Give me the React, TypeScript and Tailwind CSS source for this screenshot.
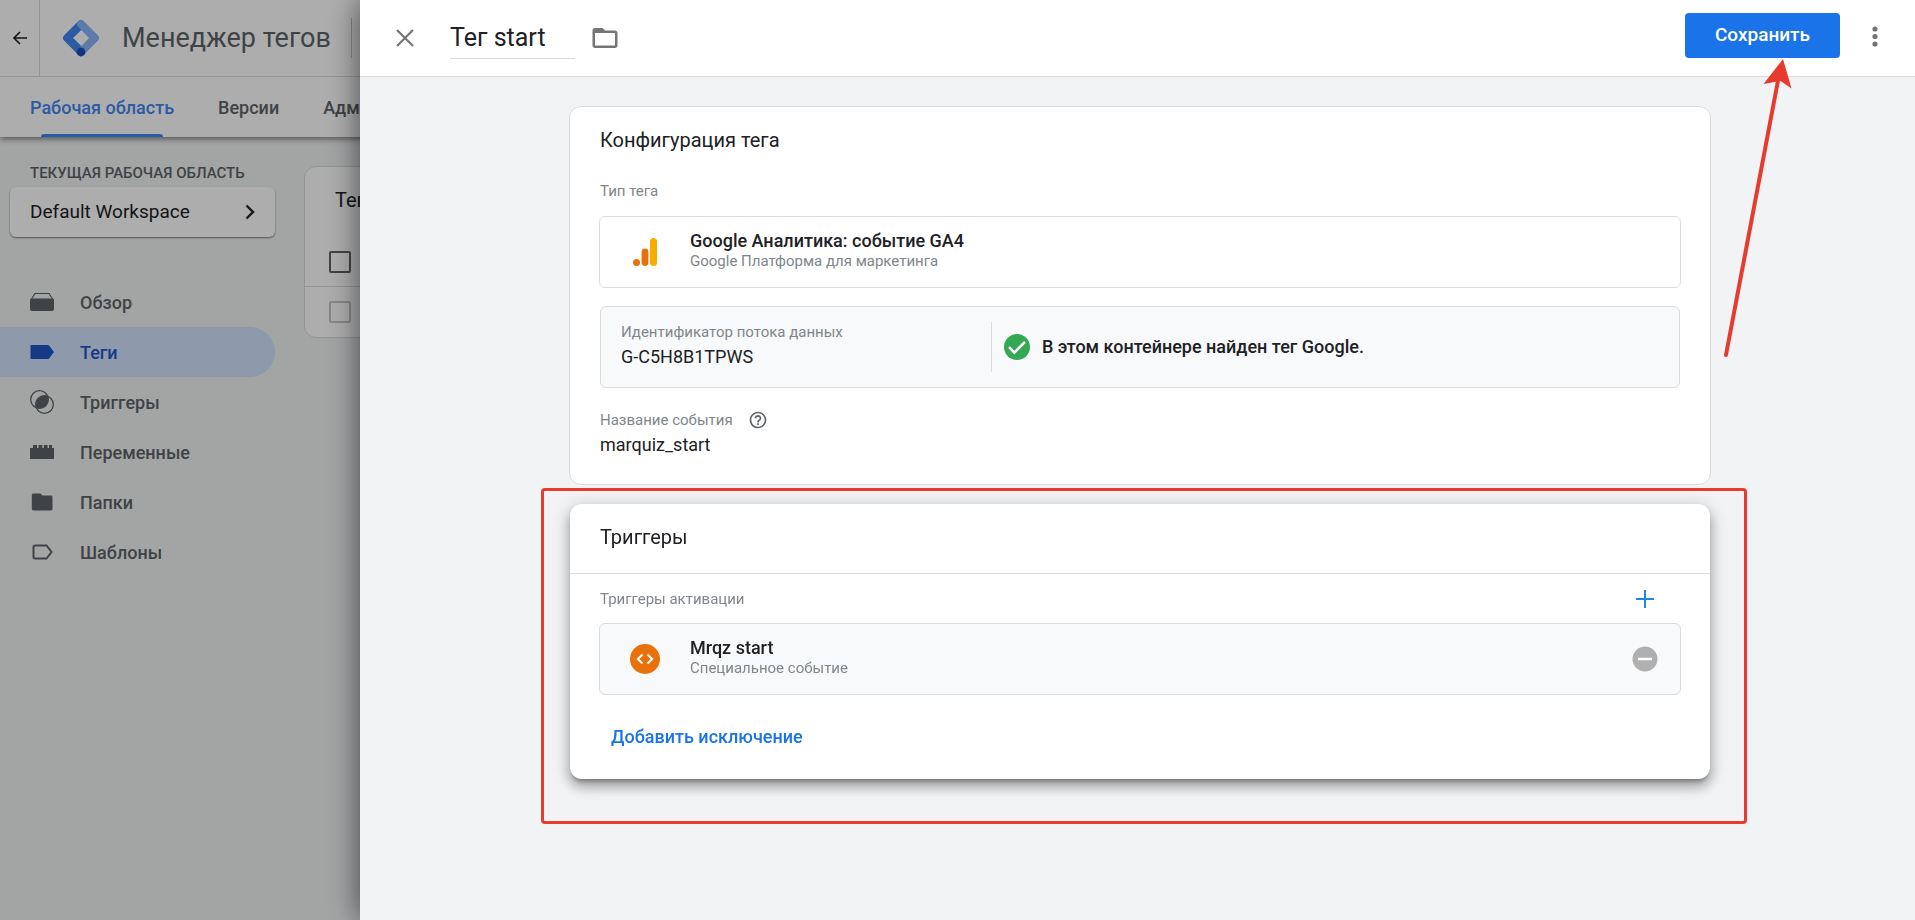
// Utils
import clsx from 'clsx';

// Types
import type { FC, ReactNode } from 'react';

interface IconProps {
    className?: string;
}

const BackIcon: FC<IconProps> = ({ className }) => (
    <svg viewBox="0 0 16 16" fill="none" stroke="currentColor" strokeWidth="1.6" className={className}>
        <path d="M15 8H2M8 2L2 8l6 6" />
    </svg>
);

const LogoIcon: FC<IconProps> = ({ className }) => (
    <svg viewBox="0 0 38 38" className={className}>
        <path
            d="M16.2 2.2 2.2 16.2a4 4 0 0 0 0 5.6l14 14a4 4 0 0 0 5.6 0l3-3.2L11.4 19 23 7.4 21.8 2.2z"
            fill="#4285f4"
        />
        <path
            d="M16.2 2.2a4 4 0 0 1 5.6 0l14 14a4 4 0 0 1 0 5.6L22.4 35.2l-5.6-5.6L27 19 16.2 8a4 4 0 0 1 0-5.8z"
            fill="#8ab4f8"
        />
        <path d="M11.4 19 19 11.4 26.6 19 19 26.6z" fill="#fff" />
        <circle cx="19" cy="33" r="4.4" fill="#1a4fc0" />
    </svg>
);

const OverviewIcon: FC<IconProps> = ({ className }) => (
    <svg viewBox="0 0 24 24" fill="currentColor" className={className}>
        <path d="M2 8.5h20a1.5 1.5 0 0 1 2 1.5v9a2 2 0 0 1-2 2H2a2 2 0 0 1-2-2v-9a1.5 1.5 0 0 1 2-1.5z" />
        <path d="M1.5 9 5 3.5h14L22.5 9" fill="none" stroke="currentColor" strokeWidth="1.2" />
    </svg>
);

const TagIcon: FC<IconProps> = ({ className }) => (
    <svg viewBox="0 0 24 24" fill="currentColor" className={className}>
        <path d="M1.5 5h16.3c.5 0 .9.2 1.2.6L24 12l-5 6.4c-.3.4-.7.6-1.2.6H1.5C.9 19 .5 18.6.5 18V6c0-.6.4-1 1-1z" />
    </svg>
);

const TriggerIcon: FC<IconProps> = ({ className }) => (
    <svg viewBox="0 0 24 24" className={className}>
        <g fill="none" stroke="currentColor" strokeWidth="1.3">
            <circle cx="9.5" cy="9.5" r="8.8" />
            <circle cx="14.5" cy="14.5" r="8.8" />
        </g>
        <path d="M17.7 6.3a8.8 8.8 0 0 1-11.4 11.4A8.8 8.8 0 0 1 17.7 6.3z" fill="currentColor" />
    </svg>
);

const VariableIcon: FC<IconProps> = ({ className }) => (
    <svg viewBox="0 0 24 24" fill="currentColor" className={className}>
        <path d="M0 8h3V5h4v3h1.5V5h3.8v3h1.5V5h3.8v3h1.4V5H22v3h2v11H0z" />
    </svg>
);

const FolderIcon: FC<IconProps> = ({ className }) => (
    <svg viewBox="0 0 24 24" fill="currentColor" className={className}>
        <path d="M3.5 3.5h7l2 2h8.3c1 0 1.7.7 1.7 1.7v11.6c0 1-.7 1.7-1.7 1.7H3.5c-1 0-1.7-.7-1.7-1.7V5.2c0-1 .7-1.7 1.7-1.7z" />
    </svg>
);

const TemplateIcon: FC<IconProps> = ({ className }) => (
    <svg viewBox="0 0 24 24" fill="none" stroke="currentColor" strokeWidth="2" className={className}>
        <path d="M5 5.5h11.5L21.5 12l-5 6.5H5A1.5 1.5 0 0 1 3.5 17V7A1.5 1.5 0 0 1 5 5.5z" />
    </svg>
);

const AnalyticsIcon: FC<IconProps> = ({ className }) => (
    <svg viewBox="0 0 24 28" className={className}>
        <rect x="17" y="0" width="7" height="28" rx="3.5" fill="#f9ab00" />
        <rect x="8.6" y="10.5" width="6.8" height="17.5" rx="3.4" fill="#e8710a" />
        <circle cx="3.5" cy="24.5" r="3.5" fill="#e8710a" />
    </svg>
);

const navItems = [
    { icon: OverviewIcon, title: 'Обзор' },
    { icon: TagIcon, title: 'Теги', active: true },
    { icon: TriggerIcon, title: 'Триггеры' },
    { icon: VariableIcon, title: 'Переменные' },
    { icon: FolderIcon, title: 'Папки' },
    { icon: TemplateIcon, title: 'Шаблоны' },
];

const Sidebar: FC = () => (
    <aside className="w-[275px] shrink-0 pt-[26px]">
        <h2 className="pl-[30px] text-[15px] leading-5 font-medium whitespace-nowrap text-[#5f6368]">
            ТЕКУЩАЯ РАБОЧАЯ ОБЛАСТЬ
        </h2>
        <button
            type="button"
            className="mt-1 ml-2.5 flex h-[50px] w-[265px] items-center justify-between rounded-md bg-white pr-5 pl-5 text-[19px] text-[#202124] shadow-[0_1px_2px_rgba(0,0,0,0.5)]"
        >
            Default Workspace
            <svg viewBox="0 0 10 16" fill="none" stroke="currentColor" strokeWidth="2.4" className="h-4 w-2.5">
                <path d="M1.5 1.5 8 8l-6.5 6.5" />
            </svg>
        </button>
        <nav className="mt-10">
            {navItems.map(({ icon: Icon, title, active }) => (
                <a
                    key={title}
                    href="#"
                    className={clsx(
                        'flex h-[50px] items-center gap-[26px] rounded-r-full pl-[30px] text-[18px] font-medium',
                        active ? 'bg-[#d2e3fc] text-[#1f55c6]' : 'text-[#5f6368]'
                    )}
                >
                    <Icon className="size-6" />
                    {title}
                </a>
            ))}
        </nav>
    </aside>
);

const Workspace: FC = () => (
    <div className="flex min-h-screen flex-col bg-[#f1f3f4]">
        <header className="relative bg-white shadow-[0_2px_6px_rgba(0,0,0,0.5)]">
            <div className="flex h-[77px] items-center border-b border-[#dadce0]">
                <button
                    type="button"
                    aria-label="Назад"
                    className="flex h-full w-10 items-center justify-center border-r border-[#dadce0] text-[#202124]"
                >
                    <BackIcon className="size-4" />
                </button>
                <LogoIcon className="ml-[22px] size-[38px]" />
                <h1 className="ml-[22px] w-[229px] text-[27px] whitespace-nowrap text-[#5f6368]">Менеджер тегов</h1>
                <span className="h-10 w-px bg-[#c4c7c9]" />
            </div>
            <nav className="flex h-[60px] gap-11 pl-[30px] text-[18px] font-medium whitespace-nowrap text-[#5f6368]">
                <a href="#" className="flex flex-col items-center text-[#4285f4]">
                    <span className="flex grow items-center">Рабочая область</span>
                    <span className="-mt-[3px] h-[3px] w-[122px] rounded-t-sm bg-[#4285f4]" />
                </a>
                <a href="#" className="flex items-center">
                    Версии
                </a>
                <a href="#" className="flex items-center">
                    Администрирование
                </a>
            </nav>
        </header>
        <div className="flex grow">
            <Sidebar />
            <main className="grow overflow-hidden pt-[29px] pl-[29px]">
                <section className="rounded-xl border border-[#dadce0] bg-white">
                    <h2 className="flex h-[70px] items-center pb-1 pl-[30px] text-[20px] text-[#202124]">Теги</h2>
                    <div className="flex h-[50px] items-center border-b border-[#dadce0] pl-6">
                        <input
                            type="checkbox"
                            aria-label="Выбрать все"
                            className="size-[22px] appearance-none rounded-xs border-2 border-[#5f6368]"
                        />
                    </div>
                    <div className="flex h-[50px] items-center pl-6">
                        <input
                            type="checkbox"
                            aria-label="Выбрать тег"
                            disabled
                            className="size-[22px] appearance-none rounded-xs border-2 border-[#c4c7c9]"
                        />
                    </div>
                </section>
            </main>
        </div>
    </div>
);

interface EntityProps {
    icon: ReactNode;
    title: string;
    subtitle: string;
    muted?: boolean;
    action?: ReactNode;
}

const Entity: FC<EntityProps> = ({ icon, title, subtitle, muted, action }) => (
    <div
        className={clsx(
            '-mx-px flex h-[72px] items-center rounded-md border border-[#dadce0]',
            muted ? 'bg-[#f8f9fa]' : 'bg-white'
        )}
    >
        <div className="flex w-[90px] justify-center">{icon}</div>
        <div className="grow pb-0.5">
            <p className="text-[18px] leading-5 font-medium">{title}</p>
            <p className="text-[15px] leading-5 text-[#80868b]">{subtitle}</p>
        </div>
        {action}
    </div>
);

const DrawerHeader: FC = () => (
    <header className="flex h-[77px] shrink-0 items-center border-b border-[#dadce0] bg-white text-[#757575]">
        <button type="button" aria-label="Закрыть" className="ml-9">
            <svg viewBox="0 0 18 18" fill="none" stroke="currentColor" strokeWidth="2.2" className="size-[18px]">
                <path d="M1 1l16 16M17 1 1 17" />
            </svg>
        </button>
        <input
            type="text"
            aria-label="Название тега"
            defaultValue="Тег start"
            className="mt-0.5 ml-9 h-10 w-[125px] border-b border-[#dadce0] pb-0.5 text-[25px] text-[#202124] outline-none"
        />
        <button type="button" aria-label="Папка" className="ml-[15px]">
            <svg viewBox="0 0 24 24" fill="currentColor" className="size-[30px]">
                <path d="M20 6h-8l-2-2H4c-1.1 0-2 .9-2 2v12c0 1.1.9 2 2 2h16c1.1 0 2-.9 2-2V8c0-1.1-.9-2-2-2zm0 12H4V8h16z" />
            </svg>
        </button>
        <button
            type="button"
            className="mb-[5px] ml-auto h-[45px] w-[155px] rounded-[4px] bg-[#1a73e8] text-[19px] font-medium text-white"
        >
            Сохранить
        </button>
        <button type="button" aria-label="Ещё" className="mr-[25px] mb-0.5 ml-5 flex h-10 w-[30px] items-center justify-center">
            <svg viewBox="0 0 6 22" fill="currentColor" className="h-[22px] w-1.5">
                <circle cx="3" cy="3" r="2.6" />
                <circle cx="3" cy="10.5" r="2.6" />
                <circle cx="3" cy="18" r="2.6" />
            </svg>
        </button>
    </header>
);

const TagConfig: FC = () => (
    <section className="rounded-xl border border-[#dadce0] bg-white px-[30px] pt-5 pb-6">
        <h2 className="text-[20px] leading-[26px]">Конфигурация тега</h2>
        <p className="mt-7 mb-[15px] text-[15px] leading-5 text-[#80868b]">Тип тега</p>
        <Entity
            icon={<AnalyticsIcon className="h-7 w-6" />}
            title="Google Аналитика: событие GA4"
            subtitle="Google Платформа для маркетинга"
        />
        <div className="mt-[18px] flex h-[82px] items-center rounded-md border border-[#dadce0] bg-[#f8f9fa] pl-5">
            <div className="w-[371px] border-r border-[#dadce0]">
                <p className="text-[15px] leading-5 text-[#80868b]">Идентификатор потока данных</p>
                <p className="text-[18px] leading-[30px]">G-C5H8B1TPWS</p>
            </div>
            <svg viewBox="0 0 26 26" className="ml-3 size-[26px]">
                <circle cx="13" cy="13" r="13" fill="#34a853" />
                <path d="M5 13.2l5.4 5.4L21 7.8" fill="none" stroke="#fff" strokeWidth="2.6" />
            </svg>
            <p className="ml-3 pb-0.5 text-[18px] font-medium">В этом контейнере найден тег Google.</p>
        </div>
        <div className="mt-[22px] flex items-center gap-[15px] text-[15px] leading-5 text-[#80868b]">
            Название события
            <svg viewBox="0 0 24 24" fill="#5f6368" className="size-5">
                <path d="M11 18h2v-2h-2zm1-16C6.480 2 2 6.480 2 12s4.480 10 10 10 10-4.480 10-10S17.520 2 12 2m0 18c-4.410 0-8-3.590-8-8s3.590-8 8-8 8 3.590 8 8-3.590 8-8 8m0-14c-2.210 0-4 1.790-4 4h2c0-1.100.9-2 2-2s2 .9 2 2c0 2-3 1.750-3 5h2c0-2.250 3-2.500 3-5 0-2.210-1.790-4-4-4" />
            </svg>
        </div>
        <p className="text-[18px] leading-[30px]">marquiz_start</p>
    </section>
);

const Triggers: FC = () => (
    <section className="relative mx-px mt-[19px] rounded-xl bg-white shadow-[0_5px_5px_-3px_rgba(0,0,0,0.35),0_8px_12px_1px_rgba(0,0,0,0.22),0_3px_16px_3px_rgba(0,0,0,0.14)]">
        <h2 className="border-b border-[#dadce0] px-[30px] pt-5 pb-[23px] text-[20px] leading-[26px]">Триггеры</h2>
        <div className="px-[30px] pt-[15px] pb-[30px]">
            <div className="mb-3.5 flex h-5 items-center justify-between">
                <p className="text-[15px] leading-5 text-[#80868b]">Триггеры активации</p>
                <button type="button" aria-label="Добавить триггер" className="flex w-[70px] justify-center">
                    <svg viewBox="0 0 18 18" stroke="#1e88e5" strokeWidth="2" className="size-[18px]">
                        <path d="M9 0v18M0 9h18" />
                    </svg>
                </button>
            </div>
            <Entity
                muted
                icon={
                    <svg viewBox="0 0 30 30" fill="none" className="size-[30px]">
                        <circle cx="15" cy="15" r="15" fill="#e8710a" />
                        <path d="M12.5 10.5 7.8 15l4.7 4.5M17.5 10.5l4.7 4.5-4.7 4.5" stroke="#fff" strokeWidth="2" />
                    </svg>
                }
                title="Mrqz start"
                subtitle="Специальное событие"
                action={
                    <button type="button" aria-label="Удалить триггер" className="flex w-[70px] justify-center">
                        <svg viewBox="0 0 26 26" className="size-[26px]">
                            <circle cx="13" cy="13" r="12.5" fill="#b0b0b0" />
                            <path d="M6 13h14" stroke="#fff" strokeWidth="2.5" />
                        </svg>
                    </button>
                }
            />
            <button type="button" className="mt-[30px] ml-[11px] block text-[18px] leading-6 font-medium text-[#1a73e8]">
                Добавить исключение
            </button>
        </div>
        {/* Highlight frame around the card */}
        <div className="pointer-events-none absolute -top-4 -right-[37px] -bottom-[45px] -left-[29px] rounded-[4px] border-3 border-[#e63c30]" />
    </section>
);

const Drawer: FC = () => (
    <div
        role="dialog"
        aria-label="Тег start"
        className="fixed inset-y-0 right-0 left-[360px] flex flex-col bg-[#f1f3f4] text-[#202124] shadow-[0_0_30px_rgba(0,0,0,0.6)]"
    >
        <DrawerHeader />
        <div className="grow overflow-y-auto pt-[29px] pl-[5px]">
            <div className="mx-auto max-w-[1142px]">
                <TagConfig />
                <Triggers />
            </div>
        </div>
        {/* Arrow pointing at the save button */}
        <svg
            viewBox="0 0 80 300"
            fill="#e63c30"
            className="pointer-events-none absolute top-[58px] right-[115px] h-[300px] w-20"
        >
            <path d="M63 1 71.5 30.5 60.5 23 43.5 26z" />
            <path d="M58.5 20 6 297" stroke="#e63c30" strokeWidth="4" strokeLinecap="round" />
        </svg>
    </div>
);

export default function App() {
    return (
        <div className="font-[Roboto,sans-serif]">
            <Workspace />
            <div className="fixed inset-0 bg-black/32" />
            <Drawer />
        </div>
    );
}
